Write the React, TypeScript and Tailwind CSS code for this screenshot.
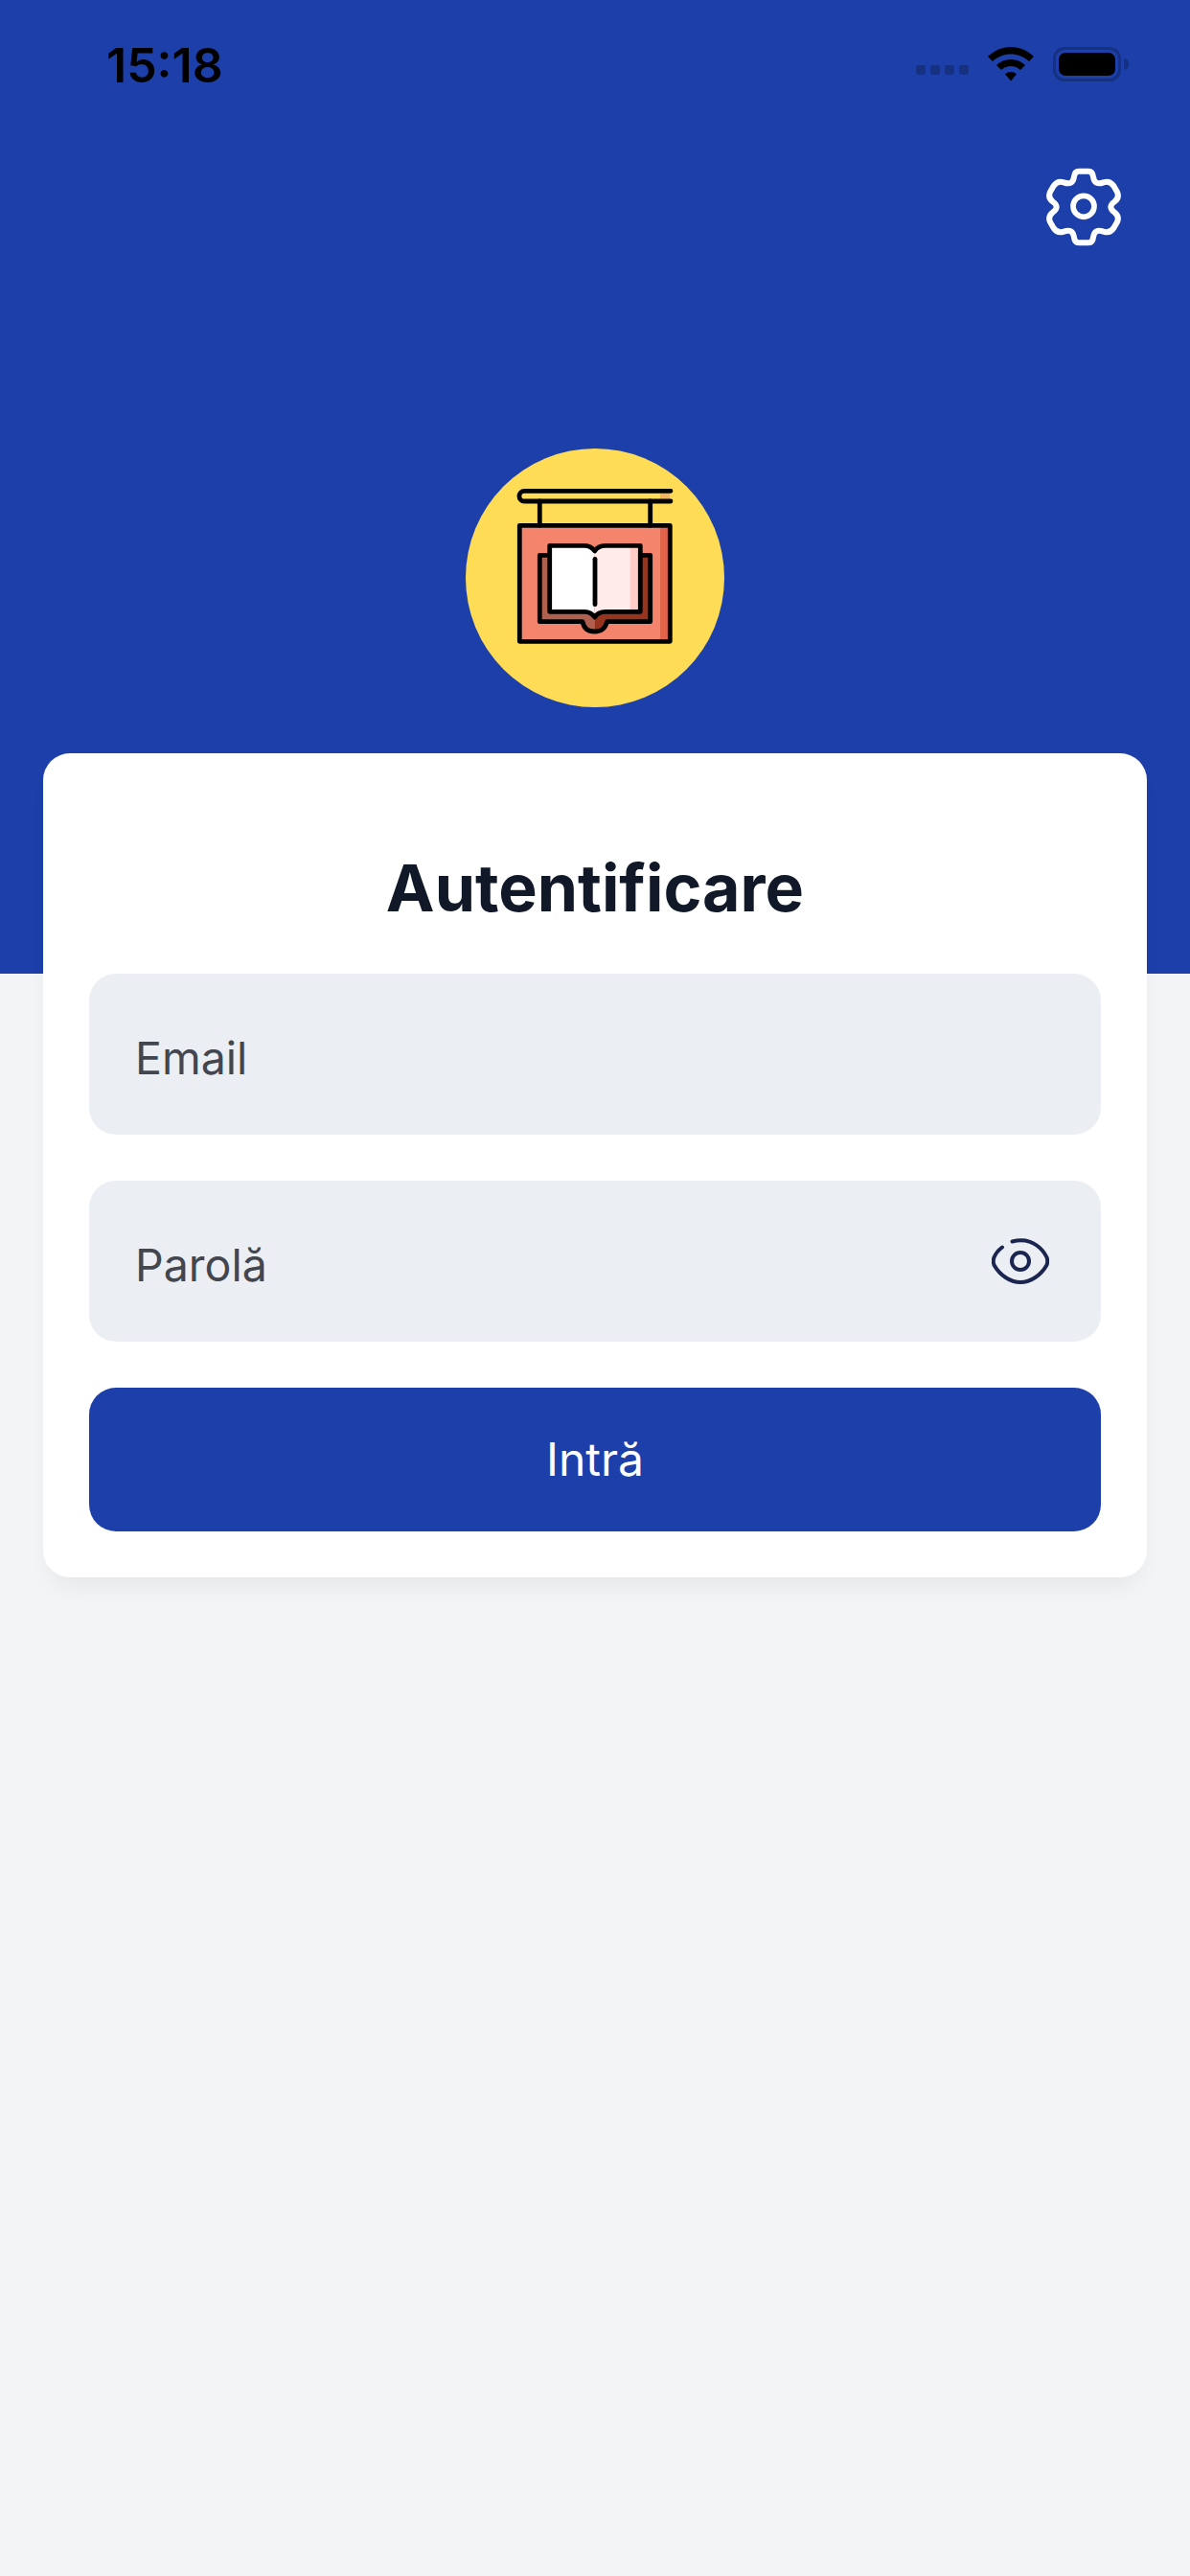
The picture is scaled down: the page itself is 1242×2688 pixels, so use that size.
import React from "react";

const font = { fontFamily: "Inter, 'Noto Sans', sans-serif" };

const SignLogo: React.FC = () => (
  <svg viewBox="0 0 270 270" className="w-[270px] h-[270px]">
    <circle cx="135" cy="135" r="135" fill="#ffdc56" />
    <rect x="203" y="47" width="10" height="8" fill="#f7b45f" />
    <rect x="56" y="80" width="157" height="121" fill="#f4846c" />
    <rect x="203" y="82" width="10" height="118" fill="#e2634a" />
    <path d="M77.3 111.3H134.7V191Q124 191 122 180.7H77.3Z" fill="#b0604e" />
    <path d="M134.7 111.3H192.7V180.7H147.500Q145 191 134.7 191Z" fill="#96341d" />
    <path d="M87.7 101.3H124Q131 101.5 134.7 107V176Q131 170.5 124 170.3H87.7Z" fill="#ffffff" />
    <path d="M134.7 107Q138 101.5 146 101.3H182.3V170.3H146Q138 170.5 134.7 176Z" fill="#ffecea" />
    <rect x="171.7" y="103" width="9" height="65.5" fill="#ffcdc8" />
    <g fill="none" stroke="#000" strokeWidth="4.8" strokeLinecap="round" strokeLinejoin="round">
      <path d="M214 44.3H61.3A5.35 5.35 0 0 0 61.3 55H214" />
      <path d="M77.3 55V80.3M192.7 55V80.3" />
      <rect x="56.3" y="80.3" width="157" height="121" />
      <path d="M87.7 111.3H77.3V180.7H122Q124 191 134.7 191Q145 191 147.5 180.7H192.7V111.3H182.3" />
      <path d="M134.7 107Q131 101.5 124 101.3H87.7V170.3H124Q131 170.5 134.7 176Q138 170.5 146 170.3H182.3V101.3H146Q138 101.5 134.7 107Z" />
      <path d="M135 115.3V162.7" />
    </g>
  </svg>
);

const GearIcon: React.FC = () => (
  <svg viewBox="0 0 300 300" className="w-[100px] h-[100px]" fill="none" stroke="#fff" strokeWidth="18" strokeLinejoin="round">
    <path d="M135 38H165Q178 38 180 55Q184 84 212 73Q232 66 244 84L254 101Q264 120 246 134Q224 150 246 166Q264 180 254 199L244 216Q232 234 212 227Q184 216 180 245Q178 262 165 262H135Q122 262 120 245Q116 216 88 227Q68 234 56 216L46 199Q36 180 54 166Q76 150 54 134Q36 120 46 101L56 84Q68 66 88 73Q116 84 120 55Q122 38 135 38Z" />
    <circle cx="150" cy="148" r="33" strokeWidth="17" />
  </svg>
);

const EyeIcon: React.FC = () => (
  <svg viewBox="0 0 60 48" className="w-[60px] h-[48px]" fill="none" stroke="#1a2550" strokeWidth="4" strokeLinecap="round">
    <path d="M21.5 3.5Q36 -0.5 47 7.5Q54 12.5 57.5 20Q59 24 57.5 28Q53 36 45.5 41Q38 46 30 46Q22 46 14.5 41Q7 36 2.5 28Q1 24 2.5 20Q5 14 11 9.5" />
    <circle cx="30" cy="24" r="9" />
  </svg>
);

const StatusBar: React.FC = () => (
  <div className="h-[136px] flex items-center justify-between pl-[111px] pr-[64px]">
    <span className="text-[50px] leading-none font-semibold text-black">15:18</span>
    <div className="flex items-center mb-[2px]">
      <div className="flex gap-[5px] mt-[12px] mr-[20px]">
        <span className="w-[10px] h-[10px] rounded-[3px] bg-[#15317f]" />
        <span className="w-[10px] h-[10px] rounded-[3px] bg-[#15317f]" />
        <span className="w-[10px] h-[10px] rounded-[3px] bg-[#15317f]" />
        <span className="w-[10px] h-[10px] rounded-[3px] bg-[#15317f]" />
      </div>
      <svg viewBox="0 0 48 36" className="w-[48px] h-[36px] mr-[20px]">
        <path d="M24 0C15 0 7 3.500 0 10L5 15C10.500 10 17 7.500 24 7.500C31 7.500 37.500 10 43 15L48 10C41 3.500 33 0 24 0Z" fill="#000" />
        <path d="M24 13C18 13 13 15 9 19L14 24C17 21.500 20.500 20 24 20C27.500 20 31 21.500 34 24L39 19C35 15 30 13 24 13Z" fill="#000" />
        <path d="M24 26C22 26 20 26.800 18 28.300L24 35.500L30 28.300C28 26.800 26 26 24 26Z" fill="#000" />
      </svg>
      <div className="w-[71px] h-[36px] rounded-[12px] border-[3px] border-[#15317f] p-[3px]">
        <div className="w-full h-full rounded-[7px] bg-black" />
      </div>
      <div className="w-[5px] h-[12px] rounded-r-[5px] bg-[#15317f] ml-[3px]" />
    </div>
  </div>
);

export default function App() {
  return (
    <div style={font} className="min-h-[2688px] bg-[#f3f4f6]">
      <div className="h-[1016px] bg-[#1c3faa] flex flex-col">
        <StatusBar />
        <div className="flex justify-end pr-[61px] pt-[30px]">
          <GearIcon />
        </div>
        <div className="flex justify-center mt-[202px]">
          <SignLogo />
        </div>
      </div>
      <div className="relative mx-[45px] -mt-[230px] px-[48px] pb-[48px] bg-white rounded-[28px] shadow-[0_16px_24px_-8px_rgba(0,0,0,0.06)]">
        <h1 className="h-[230px] flex items-center justify-center text-[68px] font-bold text-[#111827] pt-[50px]">
          Autentificare
        </h1>
        <div className="flex flex-col gap-[48px]">
          <div className="h-[168px] rounded-[28px] bg-[#ebeef3]">
            <input
              placeholder="Email"
              className="w-full h-full px-[48px] pt-[8px] text-[46.500px] bg-transparent outline-none placeholder:text-[#44464f]"
            />
          </div>
          <div className="relative h-[168px] rounded-[28px] bg-[#ebeef3]">
            <input
              placeholder="Parolă"
              className="w-full h-full pl-[48px] pr-[120px] pt-[8px] text-[46.500px] bg-transparent outline-none placeholder:text-[#44464f]"
            />
            <div className="absolute right-[54px] top-[60px]">
              <EyeIcon />
            </div>
          </div>
          <button className="h-[150px] rounded-[28px] bg-[#1c3faa] text-white text-[48px]">Intră</button>
        </div>
      </div>
    </div>
  );
}
